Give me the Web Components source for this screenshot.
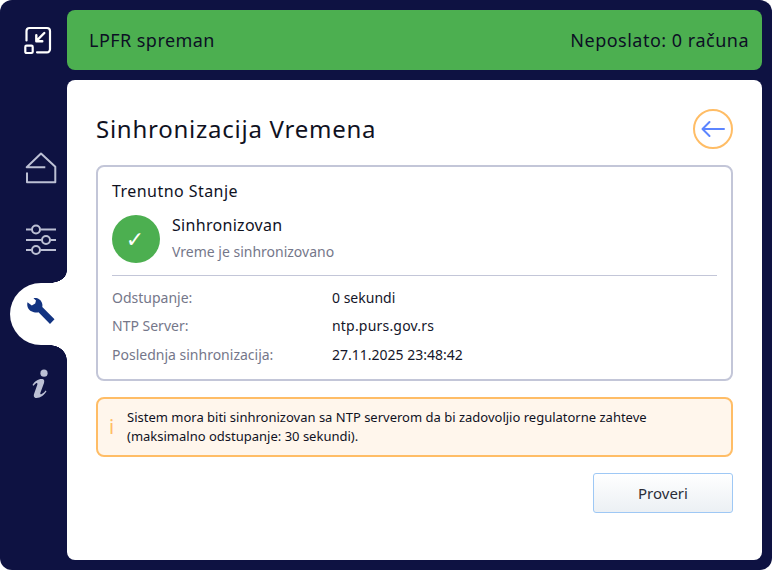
<!DOCTYPE html>
<html>
<head>
<meta charset="utf-8">
<style>
  html, body { margin: 0; padding: 0; background: #fff; }
  body { font-family: "Noto Sans", sans-serif; }
</style>
</head>
<body>
<lpfr-app>
  <side-nav slot="nav"></side-nav>
  <status-bar slot="status" left="LPFR spreman" right="Neposlato: 0 računa"></status-bar>
  <time-sync slot="content"></time-sync>
</lpfr-app>

<script>
class LpfrApp extends HTMLElement {
  constructor() {
    super();
    this.attachShadow({ mode: 'open' }).innerHTML = `
      <style>
        :host { display: flex; width: 772px; height: 570px; background: #0e1242; border-radius: 12px; box-sizing: border-box; overflow: hidden; }
        .nav { width: 67px; flex: none; }
        .main { flex: 1; display: flex; flex-direction: column; gap: 10px; padding: 10px 10px 10px 0; min-width: 0; }
      </style>
      <div class="nav"><slot name="nav"></slot></div>
      <div class="main">
        <slot name="status"></slot>
        <slot name="content"></slot>
      </div>`;
  }
}

class SideNav extends HTMLElement {
  constructor() {
    super();
    this.attachShadow({ mode: 'open' }).innerHTML = `
      <style>
        :host { display: flex; flex-direction: column; height: 100%; }
        .top { height: 80px; display: flex; align-items: center; justify-content: center; padding-left: 9px; box-sizing: border-box; }
        .items { margin-top: 57px; display: flex; flex-direction: column; gap: 10px; }
        .item { height: 62px; display: flex; align-items: center; justify-content: center; padding-left: 15px; box-sizing: border-box; position: relative; color: #bcc0d4; }
        .item.active { margin: 2px 0 -2px 10px; padding-left: 17px; justify-content: flex-start; background: #fff; border-radius: 31px 0 0 31px; color: #123381; }
        .item.active svg { margin-bottom: 6px; }
        .item.active::before, .item.active::after { content: ""; position: absolute; right: 0; width: 17px; }
        .item.active::before { top: -12px; height: 12px; background: radial-gradient(17px 12px at 0 0, transparent 97%, #fff 100%); }
        .item.active::after { bottom: -15px; height: 15px; background: radial-gradient(17px 15px at 0 100%, transparent 97%, #fff 100%); }
        svg { display: block; }
      </style>
      <div class="top">
        <svg width="30" height="30" viewBox="0 0 30 30" fill="none" stroke="#fff" stroke-width="2.200" stroke-linecap="round" stroke-linejoin="round">
          <path d="M3.500 15.500V6a3 3 0 0 1 3-3H24a3 3 0 0 1 3 3v18.300a3 3 0 0 1-3 3H14"/>
          <rect x="2.300" y="20.700" width="7.400" height="7.300" rx="1.200"/>
          <path d="M21.300 8l-7.600 7.700M13.300 10.300v6h6" stroke-width="2.400"/>
        </svg>
      </div>
      <div class="items">
        <div class="item">
          <svg width="32" height="32" viewBox="0 0 32 32" fill="none" stroke="currentColor" stroke-width="2" stroke-linejoin="round">
            <path d="M20.300 15.200H1.700L16 1.500l14.300 13.200V30.300H2V20.500"/>
          </svg>
        </div>
        <div class="item">
          <svg width="32" height="32" viewBox="0 0 32 32" fill="none" stroke="currentColor" stroke-width="2">
            <path d="M1 5.500h5.500M15.500 5.500H31M1 16h15.500M25.500 16H31M1 26h5.500M15.500 26H31"/>
            <circle cx="11" cy="5.500" r="4"/><circle cx="21" cy="16" r="4"/><circle cx="11" cy="26" r="4"/>
          </svg>
        </div>
        <div class="item active">
          <svg width="28" height="28" viewBox="0 0 28 28">
            <path fill="currentColor" d="M6.500 1.200C10 .3 14 2.500 15 6c.5 1.500.6 2.800.3 4L27.500 22.300 23 27 11.500 15.300C8 16 2.500 14.800.8 10.500.2 9 0 7.500.5 5.300L4.800 8.500 8.200 6.500 9 3.500Z"/>
          </svg>
        </div>
        <div class="item">
          <svg width="20" height="30" viewBox="0 0 20 30" fill="currentColor" style="margin-left:-4px">
            <circle cx="15" cy="4.200" r="3.600"/>
            <path d="M3.500 16C5.500 12.500 9 10 12.500 10c3 0 3 2 2.500 4l-3.500 9.500c-.5 1.500 0 2 .8 1.700 1.500-.5 3.200-2.200 4.200-3.700l1 .8C15.500 25.800 11.500 29 7.500 29c-3 0-3-2.500-2.300-4.500l3-8.500c.6-2-.2-2.500-1.200-1.800-1 .6-1.800 1.600-2.400 2.600Z"/>
          </svg>
        </div>
      </div>`;
  }
}

class StatusBar extends HTMLElement {
  connectedCallback() {
    if (this.shadowRoot) return;
    this.attachShadow({ mode: 'open' }).innerHTML = `
      <style>
        :host { display: flex; justify-content: space-between; align-items: center; height: 60px; box-sizing: border-box; padding: 0 13px 0 22px; background: #4caf50; border-radius: 8px; color: #0c0f24; font-size: 18px; letter-spacing: .45px; }
        .r { letter-spacing: .5px; }
      </style>
      <span>${this.getAttribute('left')}</span>
      <span class="r">${this.getAttribute('right')}</span>`;
  }
}

class InfoRow extends HTMLElement {
  connectedCallback() {
    if (this.shadowRoot) return;
    this.attachShadow({ mode: 'open' }).innerHTML = `
      <style>
        :host { display: flex; height: 28.5px; align-items: center; font-size: 14px; }
        .k { width: 220px; color: #75778a; }
        .v { color: #14162a; letter-spacing: ${this.getAttribute('spacing') || 0}; }
      </style>
      <span class="k">${this.getAttribute('label')}</span>
      <span class="v">${this.getAttribute('value')}</span>`;
  }
}

class StatusCard extends HTMLElement {
  constructor() {
    super();
    this.attachShadow({ mode: 'open' }).innerHTML = `
      <style>
        :host { display: block; border: 2px solid #c3c6d8; border-radius: 8px; padding: 13px 14px 10px; background: #fff; }
        h2 { margin: 0; font-size: 16px; font-weight: 400; line-height: 22px; color: #10121f; letter-spacing: .45px; }
        .state { display: flex; align-items: center; gap: 12px; margin-top: 13px; }
        .dot { width: 48px; height: 48px; border-radius: 50%; background: #4caf50; color: #fff; display: flex; align-items: center; justify-content: center; padding-right: 2px; box-sizing: border-box; font: 22px "DejaVu Sans", sans-serif; }
        .txt { margin-top: -2px; }
        .t { font-size: 16px; line-height: 22px; color: #10121f; letter-spacing: .3px; }
        .s { font-size: 14px; line-height: 20px; margin-top: 6px; color: #75778a; }
        hr { border: 0; border-top: 1px solid #c3c6d8; margin: 12px 0 7px; }
      </style>
      <h2>Trenutno Stanje</h2>
      <div class="state">
        <div class="dot">✓</div>
        <div class="txt"><div class="t">Sinhronizovan</div><div class="s">Vreme je sinhronizovano</div></div>
      </div>
      <hr>
      <slot></slot>`;
  }
}

class WarnBox extends HTMLElement {
  constructor() {
    super();
    this.attachShadow({ mode: 'open' }).innerHTML = `
      <style>
        :host { display: flex; align-items: center; gap: 16px; border: 2px solid #ffbd66; border-radius: 8px; background: #fff6ec; padding: 9px 14px 9px 11px; font-size: 13px; line-height: 19px; color: #10121f; }
        .i { color: #ffbd66; font-size: 20px; width: 2px; text-align: center; }
      </style>
      <span class="i">i</span>
      <span><slot></slot></span>`;
  }
}

class TimeSync extends HTMLElement {
  constructor() {
    super();
    this.attachShadow({ mode: 'open' }).innerHTML = `
      <style>
        :host { display: block; height: 480px; box-sizing: border-box; background: #fff; border-radius: 8px; padding: 28px 29px 0; }
        .head { display: flex; justify-content: space-between; align-items: center; height: 42px; }
        h1 { margin: -2px 0 0; font-size: 24px; font-weight: 400; color: #10121f; letter-spacing: .75px; }
        .back { width: 40px; height: 40px; box-sizing: border-box; border: 2px solid #ffbd66; border-radius: 50%; display: flex; align-items: center; justify-content: center; background: #fff; }
        status-card { margin-top: 15px; }
        warn-box { margin-top: 16px; }
        .act { display: flex; justify-content: flex-end; margin-top: 16px; }
        button { width: 140px; height: 40px; font: 15px "Noto Sans", sans-serif; color: #2b2d38; border: 1px solid #9ec8f5; border-radius: 3px; background: linear-gradient(#fff, #ecf0f4); }
      </style>
      <div class="head">
        <h1>Sinhronizacija Vremena</h1>
        <div class="back">
          <svg width="24" height="18" viewBox="0 0 24 18" fill="none" stroke="#5c85ff" stroke-width="2" stroke-linecap="round" stroke-linejoin="round"><path d="M23 9H1.500M8.500 2L1.500 9l7 7"/></svg>
        </div>
      </div>
      <status-card>
        <info-row label="Odstupanje:" value="0 sekundi"></info-row>
        <info-row label="NTP Server:" value="ntp.purs.gov.rs" spacing=".2px"></info-row>
        <info-row label="Poslednja sinhronizacija:" value="27.11.2025 23:48:42"></info-row>
      </status-card>
      <warn-box>Sistem mora biti sinhronizovan sa NTP serverom da bi zadovoljio regulatorne zahteve (maksimalno odstupanje: 30 sekundi).</warn-box>
      <div class="act"><button>Proveri</button></div>`;
  }
}

customElements.define('lpfr-app', LpfrApp);
customElements.define('side-nav', SideNav);
customElements.define('status-bar', StatusBar);
customElements.define('info-row', InfoRow);
customElements.define('status-card', StatusCard);
customElements.define('warn-box', WarnBox);
customElements.define('time-sync', TimeSync);
</script>
</body>
</html>
